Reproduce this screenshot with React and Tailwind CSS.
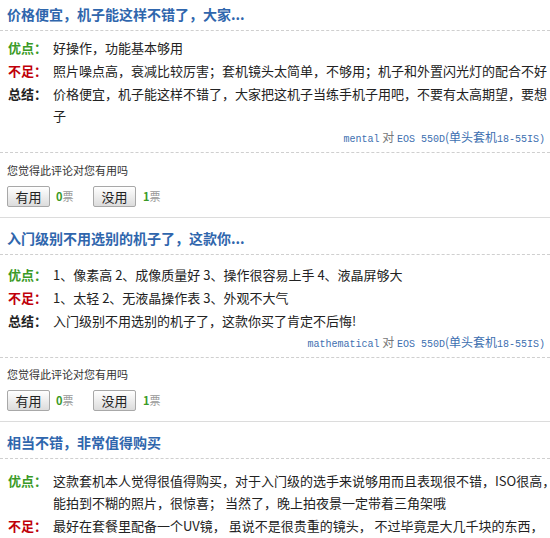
import React from 'react';

const reviews = [
    {
        title: '价格便宜，机子能这样不错了，大家...',
        rowsPt: 'pt-[6px]',
        qPt: 'pt-[9px]',
        rows: [
            { label: '优点：', color: 'text-[#3a9a26]', lines: ['好操作，功能基本够用'] },
            { label: '不足：', color: 'text-[#c0000a]', lines: ['照片噪点高，衰减比较厉害；套机镜头太简单，不够用；机子和外置闪光灯的配合不好'] },
            { label: '总结：', color: 'text-[#222]', lines: ['价格便宜，机子能这样不错了，大家把这机子当练手机子用吧，不要有太高期望，要想', '子'] },
        ],
        user: 'mental',
        up: 0,
        down: 1,
    },
    {
        title: '入门级别不用选别的机子了，这款你...',
        rowsPt: 'pt-[9px]',
        qPt: 'pt-[8px]',
        rows: [
            { label: '优点：', color: 'text-[#3a9a26]', lines: ['1、像素高 2、成像质量好 3、操作很容易上手 4、液晶屏够大'] },
            { label: '不足：', color: 'text-[#c0000a]', lines: ['1、太轻 2、无液晶操作表 3、外观不大气'] },
            { label: '总结：', color: 'text-[#222]', lines: ['入门级别不用选别的机子了，这款你买了肯定不后悔!'] },
        ],
        user: 'mathematical',
        up: 0,
        down: 1,
    },
    {
        title: '相当不错，非常值得购买',
        rowsPt: 'pt-[11px]',
        rows: [
            { label: '优点：', color: 'text-[#3a9a26]', lines: ['这款套机本人觉得很值得购买，对于入门级的选手来说够用而且表现很不错，ISO很高，', '能拍到不糊的照片，很惊喜； 当然了，晚上拍夜景一定带着三角架哦'] },
            { label: '不足：', color: 'text-[#c0000a]', lines: ['最好在套餐里配备一个UV镜， 虽说不是很贵重的镜头， 不过毕竟是大几千块的东西，'] },
        ],
    },
];

function VoteButton({ children }) {
    return (
        <button className="h-[21px] w-[43px] rounded-[2px] border border-[#a8a8a8] bg-gradient-to-b from-[#ffffff] to-[#dcdcdc] text-[13px] leading-[19px] text-[#222]">
            {children}
        </button>
    );
}

function Review({ review, first }) {
    return (
        <div className={(first ? 'pt-[4px]' : 'pt-[10px]') + (review.user ? ' border-b border-[#dcdcdc]' : '')}>
            {/* title */}
            <div className="px-[7px] pb-[6px] text-[14px] leading-[20px] font-bold text-[#2f66ad] border-b border-dashed border-[#cfcfcf]">
                {review.title}
            </div>

            {/* pros / cons / summary */}
            <div className={review.rowsPt + ' px-[8px]'}>
                {review.rows.map((row) => (
                    <div key={row.label} className="flex mb-[1px] text-[13px] leading-[22px]">
                        <div className={'w-[45px] shrink-0 font-bold ' + row.color}>{row.label}</div>
                        <div className="text-[#222] whitespace-nowrap">
                            {row.lines.map((l, i) => (
                                <div key={i}>{l}</div>
                            ))}
                        </div>
                    </div>
                ))}
            </div>

            {review.user && (
                <>
                    <div className="pt-[1px] pb-[4px] pr-[5px] text-right text-[12px] leading-[16px] border-b border-dashed border-[#cfcfcf]">
                        <span className="font-['Liberation_Mono',monospace] text-[10px] text-[#3d6fb0]">{review.user}</span>
                        <span className="text-[#777]"> 对 </span>
                        <span className="font-['Liberation_Mono',monospace] text-[10px] text-[#3d6fb0]">EOS 550D</span>
                        <span className="text-[#3d6fb0]">(单头套机</span>
                        <span className="font-['Liberation_Mono',monospace] text-[10px] text-[#3d6fb0]">18-55IS)</span>
                    </div>

                    {/* helpful? */}
                    <div className={review.qPt + ' px-[7px] pb-[10px]'}>
                        <div className="text-[11px] leading-[16px] text-[#333]">您觉得此评论对您有用吗</div>
                        <div className="mt-[8px] flex items-center">
                            <VoteButton>有用</VoteButton>
                            <span className="ml-[6px] w-[37px] text-[11px] text-[#999]">
                                <b className="text-[#3a9a26]">{review.up}</b>票
                            </span>
                            <VoteButton>没用</VoteButton>
                            <span className="ml-[7px] text-[11px] text-[#999]">
                                <b className="text-[#3a9a26]">{review.down}</b>票
                            </span>
                        </div>
                    </div>
                </>
            )}
        </div>
    );
}

export default function App() {
    return (
        <div className="w-[550px] h-[538px] overflow-hidden bg-white font-['Noto_Sans_CJK_SC',sans-serif]">
            {reviews.map((r, i) => (
                <Review key={i} review={r} first={i === 0} />
            ))}
        </div>
    );
}
